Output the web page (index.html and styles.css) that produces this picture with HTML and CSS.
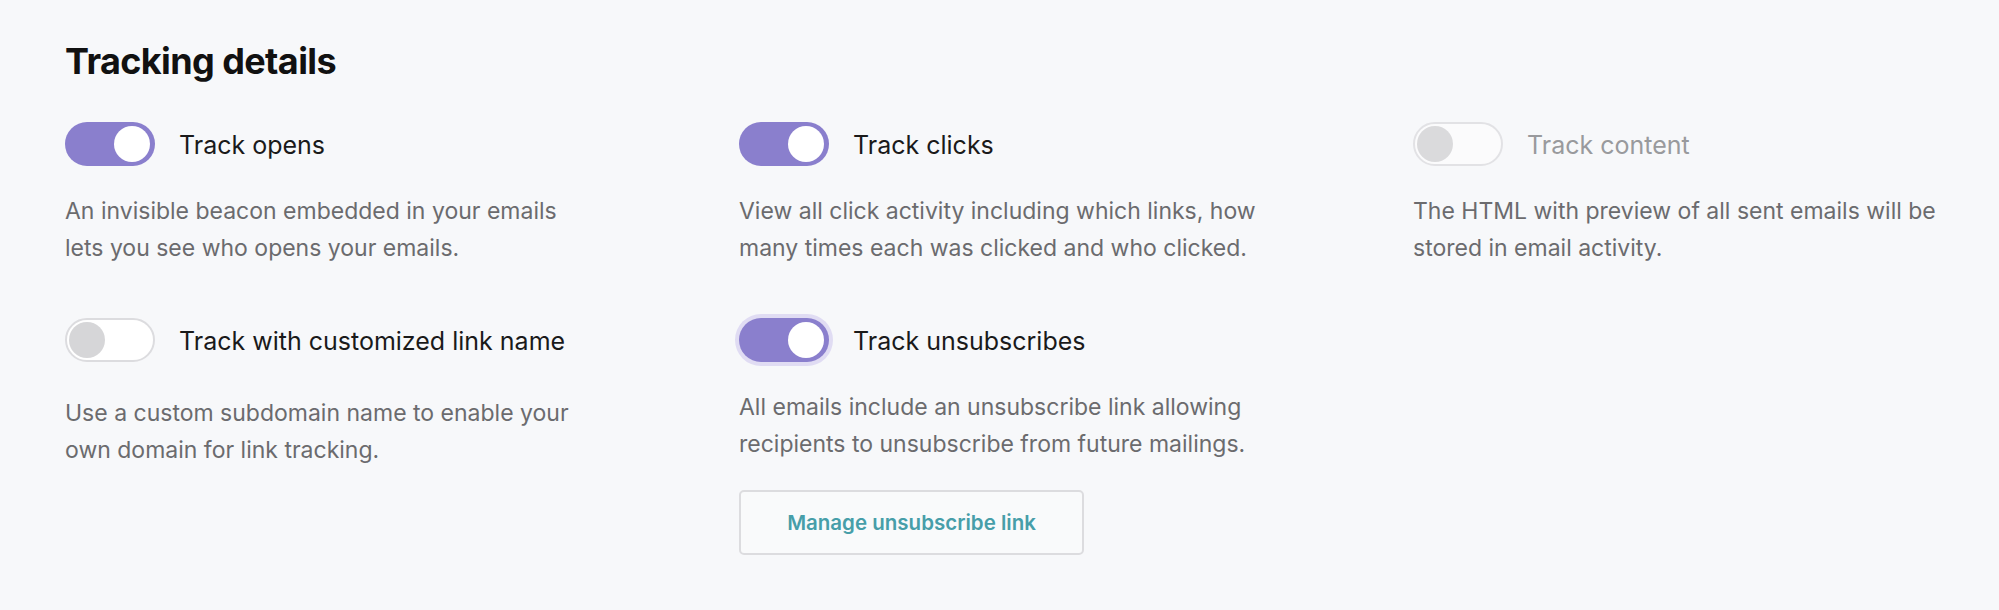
FILE: index.html
```html
<!DOCTYPE html>
<html lang="en">
<head>
<meta charset="utf-8">
<title>Tracking details</title>
<link rel="stylesheet" href="styles.css">
</head>
<body>
<main class="page">
  <h1 class="title">Tracking details</h1>
  <div class="grid">
    <section class="item">
      <div class="head">
        <span class="toggle toggle--on"><span class="knob"></span></span>
        <span class="label">Track opens</span>
      </div>
      <p class="desc">An invisible beacon embedded in your emails lets you see who opens your emails.</p>
    </section>
    <section class="item">
      <div class="head">
        <span class="toggle toggle--on"><span class="knob"></span></span>
        <span class="label">Track clicks</span>
      </div>
      <p class="desc">View all click activity including which links, how many times each was clicked and who clicked.</p>
    </section>
    <section class="item">
      <div class="head">
        <span class="toggle toggle--off toggle--disabled"><span class="knob"></span></span>
        <span class="label label--disabled">Track content</span>
      </div>
      <p class="desc">The HTML with preview of all sent emails will be stored in email activity.</p>
    </section>
    <section class="item">
      <div class="head">
        <span class="toggle toggle--off"><span class="knob"></span></span>
        <span class="label">Track with customized link name</span>
      </div>
      <p class="desc desc--spaced">Use a custom subdomain name to enable your own domain for link tracking.</p>
    </section>
    <section class="item">
      <div class="head">
        <span class="toggle toggle--on toggle--focus"><span class="knob"></span></span>
        <span class="label">Track unsubscribes</span>
      </div>
      <p class="desc">All emails include an unsubscribe link allowing recipients to unsubscribe from future mailings.</p>
      <button class="btn" type="button">Manage unsubscribe link</button>
    </section>
  </div>
</main>
</body>
</html>
```

FILE: styles.css
```css
* { box-sizing: border-box; }
html, body { margin: 0; padding: 0; }
body {
  background: #f7f8fa;
  font-family: Inter, "Noto Sans", "Liberation Sans", sans-serif;
  color: #1c1c1c;
  width: 1999px;
  height: 610px;
  overflow: hidden;
}
.page {
  padding: 39px 0 0 65px;
}
.title {
  margin: 0;
  font-size: 36px;
  line-height: 44px;
  font-weight: 700;
  color: #111;
  letter-spacing: -0.6px;
}
.grid {
  margin-top: 39px;
  display: grid;
  grid-template-columns: repeat(3, 674px);
  row-gap: 51px;
  align-items: start;
}
.item {
  display: flex;
  flex-direction: column;
  align-items: flex-start;
}
.head {
  display: flex;
  align-items: center;
  gap: 24px;
  height: 44px;
}
.toggle {
  position: relative;
  display: block;
  width: 90px;
  height: 44px;
  border-radius: 22px;
  flex: none;
}
.knob {
  position: absolute;
  top: 4px;
  width: 36px;
  height: 36px;
  border-radius: 50%;
}
.toggle--on { background: #8a7fcd; }
.toggle--on .knob { right: 5px; background: #fff; }
.toggle--off {
  background: #fff;
  border: 2px solid #dcdcdf;
}
.toggle--off .knob { top: 2px; left: 2px; background: #d6d6d8; }
.toggle--disabled { background: #fbfbfc; border-color: #e2e2e5; }
.toggle--disabled .knob { background: #dadadc; }
.toggle--focus { box-shadow: 0 0 0 4px #e0dcf3; }
.label {
  font-size: 25px;
  line-height: 30px;
  color: #1a1a1a;
  position: relative;
  top: 1px;
}
.label--disabled { color: #999a9d; }
.desc {
  margin: 27px 0 0;
  max-width: 530px;
  font-size: 23px;
  line-height: 37px;
  color: #6b6b6e;
}
.desc--spaced { margin-top: 33px; }
.btn {
  margin-top: 27px;
  width: 345px;
  height: 65px;
  background: #f9fafb;
  border: 2px solid #dcdcdf;
  border-radius: 5px;
  font-family: inherit;
  font-size: 20.5px;
  font-weight: 600;
  color: #479ea9;
  cursor: pointer;
}
```
